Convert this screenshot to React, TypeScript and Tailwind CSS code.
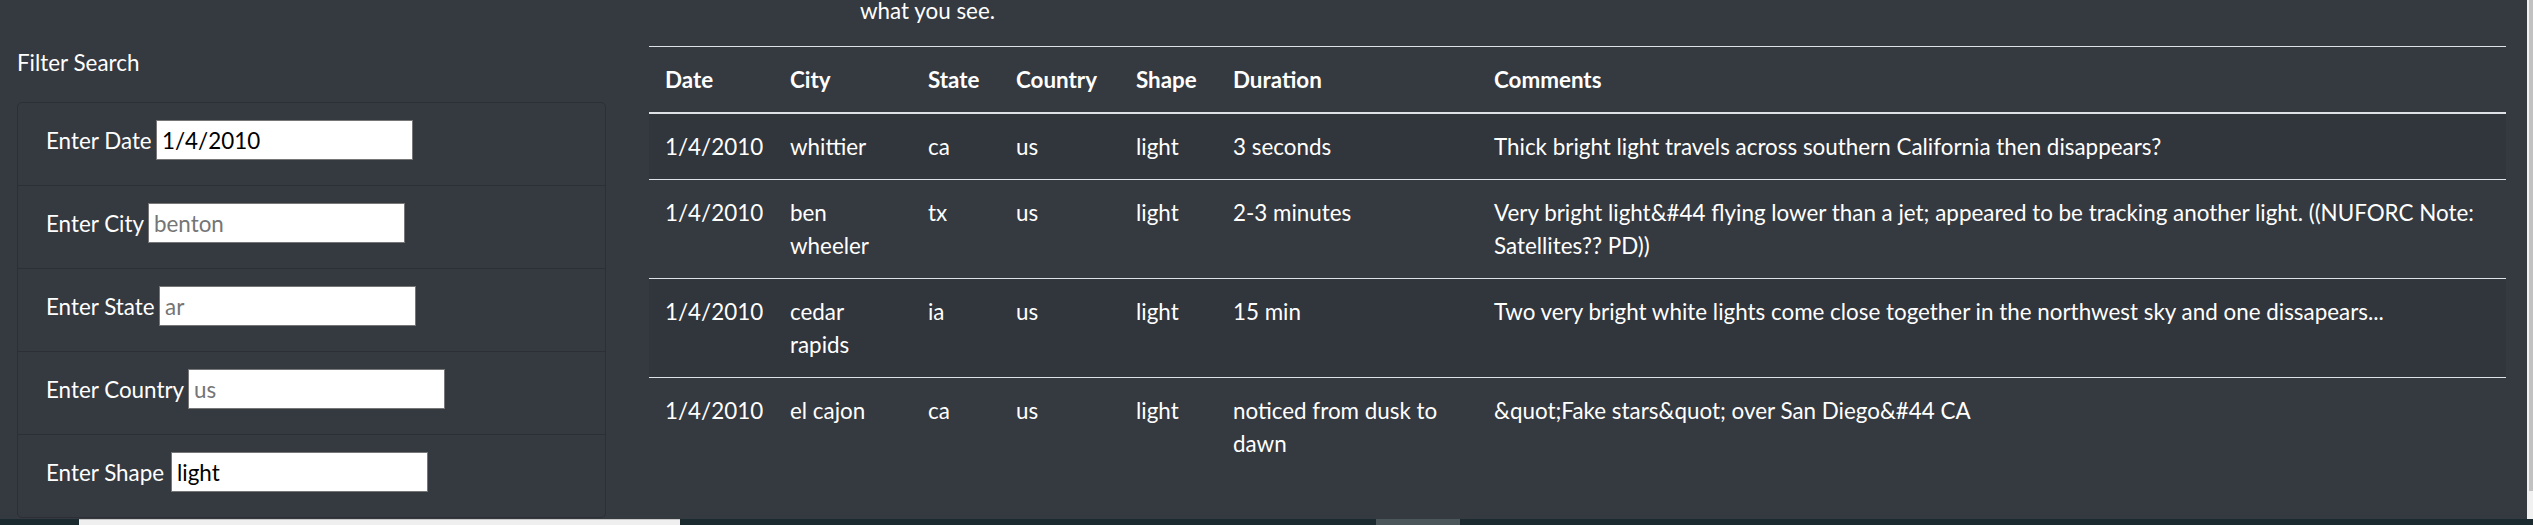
import React from 'react';

const sightings = [
  {
    date: '1/4/2010',
    city: 'whittier',
    state: 'ca',
    country: 'us',
    shape: 'light',
    duration: '3 seconds',
    comments: 'Thick bright light travels across southern California then disappears?',
  },
  {
    date: '1/4/2010',
    city: 'ben wheeler',
    state: 'tx',
    country: 'us',
    shape: 'light',
    duration: '2-3 minutes',
    comments:
      'Very bright light&#44 flying lower than a jet; appeared to be tracking another light. ((NUFORC Note: Satellites?? PD))',
  },
  {
    date: '1/4/2010',
    city: 'cedar rapids',
    state: 'ia',
    country: 'us',
    shape: 'light',
    duration: '15 min',
    comments: 'Two very bright white lights come close together in the northwest sky and one dissapears...',
  },
  {
    date: '1/4/2010',
    city: 'el cajon',
    state: 'ca',
    country: 'us',
    shape: 'light',
    duration: 'noticed from dusk to dawn',
    comments: '&quot;Fake stars&quot; over San Diego&#44 CA',
  },
];

const filters = [
  { id: 'datetime', label: 'Enter Date', labelWidth: 'w-[110px]', value: '1/4/2010' },
  { id: 'city', label: 'Enter City', labelWidth: 'w-[102px]', placeholder: 'benton' },
  { id: 'state', label: 'Enter State', labelWidth: 'w-[113px]', placeholder: 'ar' },
  { id: 'country', label: 'Enter Country', labelWidth: 'w-[142px]', placeholder: 'us' },
  { id: 'shape', label: 'Enter Shape', labelWidth: 'w-[125px]', value: 'light' },
];

const columns = [
  { title: 'Date', width: 'w-[125px]' },
  { title: 'City', width: 'w-[138px]' },
  { title: 'State', width: 'w-[88px]' },
  { title: 'Country', width: 'w-[120px]' },
  { title: 'Shape', width: 'w-[97px]' },
  { title: 'Duration', width: 'w-[261px]' },
  { title: 'Comments', width: 'w-[1028px]' },
];

const FilterPanel = () => (
  <div className="w-[649px] shrink-0 pl-[17px] pr-[43px]">
    <h5 className="pt-[46px] mb-[23px] text-[22.4px] leading-[33px] text-white">Filter Search</h5>
    <ul className="border border-[#2c3036] rounded-[5px]">
      {filters.map((f, i) => (
        <li
          key={f.id}
          className={`flex items-center pl-[28px] pt-[17px] pb-[25px] ${i > 0 ? 'border-t border-[#2c3036]' : ''}`}
        >
          <label htmlFor={f.id} className={`${f.labelWidth} shrink-0 whitespace-nowrap text-[22.4px] leading-[33px] text-white`}>
            {f.label}
          </label>
          <input
            id={f.id}
            type="text"
            defaultValue={f.value}
            placeholder={f.placeholder}
            className="w-[257px] h-[40px] bg-white border border-[#767676] px-[5px] text-[22.4px] text-black placeholder:text-[#757575] outline-none"
          />
        </li>
      ))}
    </ul>
  </div>
);

const SightingsTable = () => (
  <div className="flex-1 pr-[21px]">
    <div className="h-[46px] overflow-hidden">
      <p className="-mt-[6px] pl-[211px] text-[22.4px] leading-[33px] text-white">what you see.</p>
    </div>
    <table className="w-[1857px] table-fixed border-collapse text-white text-[22.4px] leading-[33px]">
      <colgroup>
        {columns.map((c) => (
          <col key={c.title} className={c.width} />
        ))}
      </colgroup>
      <thead>
        <tr>
          {columns.map((c) => (
            <th
              key={c.title}
              className="p-4 text-left align-bottom font-bold border-t border-b-2 border-[#dee2e6]"
            >
              {c.title}
            </th>
          ))}
        </tr>
      </thead>
      <tbody>
        {sightings.map((s, i) => (
          <tr key={i} className={i % 2 === 0 ? 'bg-[#31353c]' : ''}>
            <td className="p-4 align-top border-t border-[#dee2e6]">{s.date}</td>
            <td className="p-4 align-top border-t border-[#dee2e6]">{s.city}</td>
            <td className="p-4 align-top border-t border-[#dee2e6]">{s.state}</td>
            <td className="p-4 align-top border-t border-[#dee2e6]">{s.country}</td>
            <td className="p-4 align-top border-t border-[#dee2e6]">{s.shape}</td>
            <td className="p-4 align-top border-t border-[#dee2e6]">{s.duration}</td>
            <td className="p-4 align-top border-t border-[#dee2e6]">{s.comments}</td>
          </tr>
        ))}
      </tbody>
    </table>
  </div>
);

export default function App() {
  return (
    <div className="h-[525px] w-full overflow-hidden bg-[#353940] flex flex-col" style={{ fontFamily: 'Lato, "Noto Sans", sans-serif' }}>
      <div className="flex h-[519px]">
        <FilterPanel />
        <SightingsTable />
        {/* window scrollbar */}
        <div className="w-[6px] shrink-0 flex flex-col bg-[#f1f1f1]">
          <div className="ml-[2px] h-[491px] bg-[#c1c1c1]" />
        </div>
      </div>
      {/* bottom strip */}
      <div className="flex h-[6px] bg-[#1a2a2e]">
        <div className="w-[79px]" />
        <div className="w-[601px] bg-[#efefef] border-t border-[#c8c8c8]" />
        <div className="w-[696px]" />
        <div className="w-[84px] bg-[#4a5659]" />
      </div>
    </div>
  );
}
